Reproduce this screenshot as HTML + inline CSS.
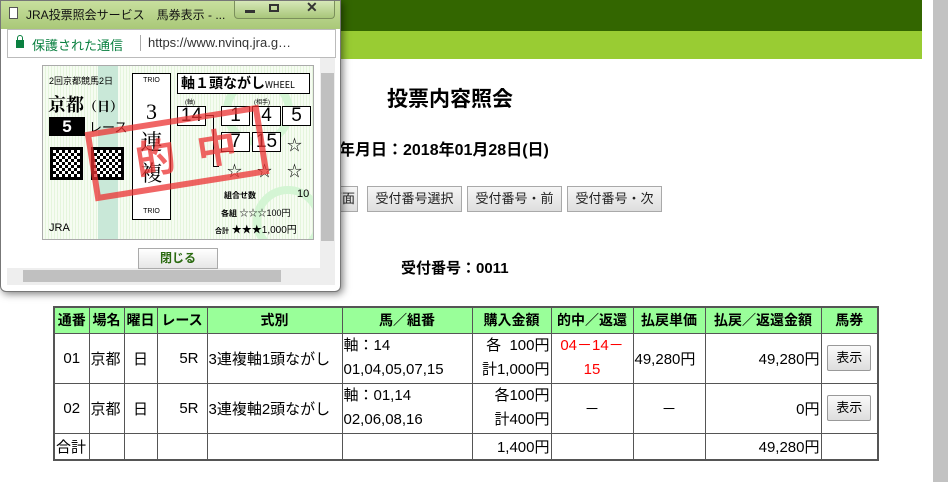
<!DOCTYPE html>
<html><head><meta charset="utf-8"><style>
*{margin:0;padding:0;box-sizing:border-box}
body{width:950px;height:482px;overflow:hidden;background:#fff;font-family:"Liberation Sans","Noto Sans CJK JP",sans-serif;position:relative;color:#000}
.abs{position:absolute}
.btn{position:absolute;top:186px;height:26px;border:1px solid #a9a9a9;background:linear-gradient(#f6f6f6,#dedede);font-size:13px;line-height:24px;text-align:center;color:#222}
table{position:absolute;left:53px;top:306px;border-collapse:collapse;border:2px solid #555;font-size:15px}
td,th{border:1px solid #555;padding:0 1px;white-space:nowrap}
th{background:#99ff99;height:26px;font-size:14px}
.r1 td{height:50px}
.sb{background:#fff;border:1px solid #999;width:44px;height:26px;font-size:13px;background:linear-gradient(#fafafa,#ddd);display:inline-block;text-align:center;line-height:24px;border-radius:2px}
.tk{position:absolute;font-family:"Liberation Serif","Noto Serif CJK SC",serif}
.bx{position:absolute;border:1.5px solid #000;background:#fff;font-size:19px;text-align:center;line-height:18px;font-family:"Liberation Sans",sans-serif}
</style></head><body>
<div class="abs" style="left:0;top:0;width:922px;height:31px;background:#336600"></div>
<div class="abs" style="left:0;top:31px;width:922px;height:28px;background:#99cc33"></div>
<div class="abs" style="left:933px;top:0;width:15px;height:482px;background:#c2c2c2"></div>
<div class="abs" style="left:387px;top:83px;font-size:21px;font-weight:bold">投票内容照会</div>
<div class="abs" style="left:307px;top:136px;font-size:16px;font-weight:bold">購入年月日：2018年01月28日(日)</div>
<div class="btn" style="left:300px;width:58px">初期画面</div>
<div class="btn" style="left:367px;width:95px">受付番号選択</div>
<div class="btn" style="left:467px;width:95px">受付番号・前</div>
<div class="btn" style="left:567px;width:95px">受付番号・次</div>
<div class="abs" style="left:401px;top:257px;font-size:15px;font-weight:bold">受付番号：0011</div>
<table>
<tr><th style="width:35px">通番</th><th style="width:35px">場名</th><th style="width:33px">曜日</th><th style="width:50px">レース</th><th style="width:135px">式別</th><th style="width:130px">馬／組番</th><th style="width:79px">購入金額</th><th style="width:82px">的中／返還</th><th style="width:72px">払戻単価</th><th style="width:116px">払戻／返還金額</th><th style="width:57px">馬券</th></tr>
<tr class="r1"><td style="text-align:center">01</td><td>京都</td><td style="text-align:center">日</td><td style="text-align:right;padding-right:8px">5R</td><td>3連複軸1頭ながし</td><td style="line-height:24px">軸：14<br>01,04,05,07,15</td><td style="text-align:right;line-height:24px">各&nbsp; 100円<br>計1,000円</td><td style="text-align:center;color:#f00;line-height:24px">04－14－<br>15</td><td>49,280円</td><td style="text-align:right">49,280円</td><td style="text-align:center"><span class="sb">表示</span></td></tr>
<tr class="r1"><td style="text-align:center">02</td><td>京都</td><td style="text-align:center">日</td><td style="text-align:right;padding-right:8px">5R</td><td>3連複軸2頭ながし</td><td style="line-height:24px">軸：01,14<br>02,06,08,16</td><td style="text-align:right;line-height:24px">各100円<br>計400円</td><td style="text-align:center">－</td><td style="text-align:center">－</td><td style="text-align:right">0円</td><td style="text-align:center"><span class="sb">表示</span></td></tr>
<tr><td style="height:27px">合計</td><td></td><td></td><td></td><td></td><td></td><td style="text-align:right">1,400円</td><td></td><td></td><td style="text-align:right">49,280円</td><td></td></tr>
</table>

<!-- popup -->
<div class="abs" style="left:0;top:0;width:341px;height:292px;background:#fff;border:1px solid #777;border-radius:0 0 6px 6px;box-shadow:2px 2px 8px rgba(0,0,0,.5)">
 <div class="abs" style="left:0;top:0;width:339px;height:28px;background:linear-gradient(#c8df9e,#a9c878)"></div>
 <div class="abs" style="left:8px;top:6px;width:9px;height:12px;border:1px solid #555;background:#fff"></div>
 <div class="abs" style="left:25px;top:5px;font-size:12px;color:#111">JRA投票照会サービス　馬券表示 - ...</div>
 <div class="abs" style="left:233px;top:0;width:101px;height:18px;border:1px solid #7b8f5c;border-top:0;border-radius:0 0 4px 4px;background:linear-gradient(#d6e8b8,#a8c67a)"></div>
 <div class="abs" style="left:244px;top:9px;width:10px;height:3px;background:#333"></div>
 <div class="abs" style="left:268px;top:3px;width:10px;height:8px;border:2px solid #333"></div>
 <div class="abs" style="left:305px;top:-2px;font-size:14px;font-weight:bold;color:#333">✕</div>
 <div class="abs" style="left:6px;top:28px;width:329px;height:29px;background:#fff;border:1px solid #bbb"></div>
 <div class="abs" style="left:15px;top:39px;width:8px;height:8px;background:#0a8040"></div>
 <div class="abs" style="left:16px;top:34px;width:6px;height:7px;border:1.5px solid #0a8040;border-radius:3px 3px 0 0"></div>
 <div class="abs" style="left:31px;top:34px;font-size:13px;color:#0a8040">保護された通信</div>
 <div class="abs" style="left:139px;top:34px;width:1px;height:16px;background:#aaa"></div>
 <div class="abs" style="left:147px;top:34px;font-size:13px;color:#333">https://www.nvinq.jra.g…</div>
 <div class="abs" style="left:319px;top:57px;width:15px;height:211px;background:#eee"></div>
 <div class="abs" style="left:320px;top:72px;width:13px;height:168px;background:#c0c0c0"></div>
 <div class="abs" style="left:6px;top:267px;width:328px;height:17px;background:#eee"></div>
 <div class="abs" style="left:22px;top:269px;width:258px;height:12px;background:#c0c0c0"></div>
 <div class="abs" style="left:137px;top:247px;width:80px;height:21px;border:1px solid #aaa;background:linear-gradient(#fff,#e6e6e6);font-size:12px;font-weight:bold;color:#2a6a10;text-align:center;line-height:19px">閉じる</div>
 <!-- ticket -->
 <div class="abs" style="left:41px;top:64px;width:272px;height:175px;border:1px solid #aaa;background:repeating-linear-gradient(90deg,#f6fcf2 0,#f6fcf2 2px,#e5f5dd 2px,#e5f5dd 3px);overflow:hidden">
  <div class="abs" style="left:55px;top:0;width:20px;height:175px;background:#c9e8d8"></div>
  <div class="abs" style="left:180px;top:10px;width:70px;height:70px;border:8px solid #d4f5d4;border-radius:50%"></div>
  <div class="abs" style="left:210px;top:120px;width:70px;height:70px;border:8px solid #d4f5d4;border-radius:50%"></div>
  <div class="tk" style="left:6px;top:8px;font-size:9px;font-family:'Liberation Sans','Noto Sans CJK JP',sans-serif">2回京都競馬2日</div>
  <div class="tk" style="left:5px;top:25px;font-size:18px;font-weight:bold">京都<span style="font-size:13px">（日）</span></div>
  <div class="abs" style="left:6px;top:51px;width:36px;height:19px;background:#000;color:#fff;font-size:17px;font-weight:bold;text-align:center;line-height:19px">5</div>
  <div class="abs" style="left:46px;top:54px;font-size:13px;font-family:'Noto Sans CJK JP',sans-serif;line-height:14px">レース</div>
  <div class="abs" style="left:7px;top:81px;width:33px;height:33px;background:repeating-conic-gradient(#000 0 25%,#fff 0 50%) 0 0/6px 6px;border:3px solid #000"></div>
  <div class="abs" style="left:48px;top:81px;width:33px;height:33px;background:repeating-conic-gradient(#000 0 25%,#fff 0 50%) 0 0/6px 6px;border:3px solid #000"></div>
  <div class="abs" style="left:89px;top:7px;width:39px;height:147px;border:1.5px solid #000;background:#fff"></div>
  <div class="abs" style="left:89px;top:11px;width:39px;text-align:center;font-size:7px">TRIO</div>
  <div class="abs" style="left:89px;top:142px;width:39px;text-align:center;font-size:7px">TRIO</div>
  <div class="tk" style="left:89px;top:30px;width:39px;text-align:center;font-size:22px;line-height:31px">3<br>連<br>複</div>
  <div class="abs" style="left:134px;top:7px;width:133px;height:21px;border:1.5px solid #000;background:#fff;font-size:14px;font-weight:bold;line-height:18px;padding-left:3px;font-family:'Noto Sans CJK JP',sans-serif">軸１頭ながし<span style="font-size:9px;font-weight:normal">WHEEL</span></div>
  <div class="abs" style="left:142px;top:31px;font-size:6px">(軸)</div>
  <div class="abs" style="left:211px;top:31px;font-size:6px">(相手)</div>
  <div class="bx" style="left:134px;top:40px;width:29px;height:20px">14</div>
  <div class="bx" style="left:178px;top:40px;width:29px;height:20px">1</div>
  <div class="bx" style="left:209px;top:40px;width:29px;height:20px">4</div>
  <div class="bx" style="left:239px;top:40px;width:29px;height:20px">5</div>
  <div class="bx" style="left:178px;top:66px;width:29px;height:20px">7</div>
  <div class="bx" style="left:209px;top:66px;width:29px;height:20px">15</div>
  <div class="abs" style="left:163px;top:49px;width:7px;height:1px;background:#000"></div>
  <div class="abs" style="left:170px;top:49px;width:1px;height:52px;background:#000"></div>
  <div class="abs" style="left:170px;top:100px;width:6px;height:1px;background:#000"></div>
  <div class="abs" style="left:244px;top:68px;font-size:15px">☆</div>
  <div class="abs" style="left:184px;top:94px;font-size:15px">☆</div>
  <div class="abs" style="left:214px;top:94px;font-size:15px">☆</div>
  <div class="abs" style="left:244px;top:94px;font-size:15px">☆</div>
  <div class="abs" style="left:181px;top:124px;font-size:8px;font-weight:bold">組合せ数</div>
  <div class="abs" style="left:254px;top:122px;font-size:11px">10</div>
  <div class="abs" style="left:178px;top:140px;font-size:9px"><b style="font-size:8px">各組</b> ☆☆☆100円</div>
  <div class="abs" style="left:172px;top:155px;font-size:10px"><b style="font-size:7px">合計</b> ★★★1,000円</div>
  <div class="abs" style="left:6px;top:156px;font-size:11px">JRA</div>
  <div class="abs" style="left:46px;top:52px;width:176px;height:70px;border:6px solid rgba(235,50,50,.75);transform:rotate(-9deg);color:rgba(235,50,50,.75);font-size:40px;font-weight:bold;line-height:56px;letter-spacing:22px;padding-left:40px;font-family:'Noto Sans CJK JP',sans-serif">的中</div>
 </div>
</div>
</body></html>
